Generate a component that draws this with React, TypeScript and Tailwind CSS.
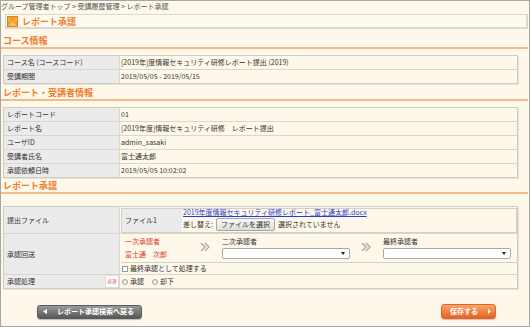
import React from "react";

const font = "font-['Noto_Sans_CJK_JP','Noto_Sans','Liberation_Sans',sans-serif]";

function Heading({ children, className = "" }: { children: React.ReactNode; className?: string }) {
  return (
    <div className={className}>
      <div className="h-[12px] pl-[2px] text-[9px] leading-[12px] font-bold text-[#ef7d2f]">{children}</div>
      <div className="mr-[1px] h-[2px] bg-[#f6b98a]" />
    </div>
  );
}

function Row({
  label,
  children,
  h,
  first = false,
  badge = false,
}: {
  label: string;
  children?: React.ReactNode;
  h?: string;
  first?: boolean;
  badge?: boolean;
}) {
  const height = h ?? (first ? "h-[13px]" : "h-[14px]");
  return (
    <div className={`flex ${height} ${first ? "" : "border-t border-[#dad6ca]"}`}>
      <div className="flex w-[115px] shrink-0 items-center justify-between bg-[#ebebeb] pl-[3px]">
        <span>{label}</span>
        {badge && (
          <span className="flex h-full w-[14px] items-center justify-center border border-[#dcdcdc] bg-white text-[4.5px] leading-none text-[#e04040]">
            必須
          </span>
        )}
      </div>
      <div className="flex min-w-0 flex-1 items-center border-l border-[#dad6ca] pl-[1px]">{children}</div>
    </div>
  );
}

function Table({ children, className = "" }: { children: React.ReactNode; className?: string }) {
  return (
    <div className={`ml-[2px] w-[515px] border border-[#cfccc2] shadow-[1px_1px_0_#e6e2d6] ${className}`}>
      {children}
    </div>
  );
}

function Chevrons() {
  return (
    <svg width="11" height="10" viewBox="0 0 11 10" className="shrink-0">
      <path d="M1 1 L5 5 L1 9 M5 1 L9 5 L5 9" fill="none" stroke="#a8a8a8" strokeWidth="1.2" />
      <path d="M2.5 1 L6.5 5 L2.5 9" fill="none" stroke="#c8c8c8" strokeWidth="0.8" />
    </svg>
  );
}

function Select() {
  return (
    <div className="flex h-[11px] w-[128px] items-center justify-end rounded-[2px] border border-[#a9a9a9] bg-white pr-[4px]">
      <svg width="4" height="3" viewBox="0 0 4 3">
        <path d="M0 0 L4 0 L2 3 Z" fill="#222" />
      </svg>
    </div>
  );
}

function Radio() {
  return (
    <span className="inline-block h-[6px] w-[6px] rounded-full border border-[#9a9a9a] bg-gradient-to-b from-[#e8e8e8] to-[#ffffff]" />
  );
}

export default function App() {
  return (
    <div className={`relative h-[327px] w-[530px] overflow-hidden border border-[#a6a6a6] bg-[#fdf8e9] text-[7px] leading-none text-[#333] ${font}`}>
      {/* breadcrumb */}
      <div className="h-[12px] pt-[1px] text-[7px] leading-[9px] text-[#555]">
        グループ管理者トップ &gt; 受講履歴管理 &gt; レポート承認
      </div>

      {/* title bar */}
      <div className="ml-[4px] mr-[1px] mt-[1px] flex h-[15px] items-center gap-[4px] border border-b-2 border-r-2 border-[#dcd8cc] bg-[#fefaee] pl-[1px]">
        <svg width="11" height="11" viewBox="0 0 11 11">
          <defs>
            <linearGradient id="g" x1="0" y1="0" x2="0" y2="1">
              <stop offset="0" stopColor="#fbbf4e" />
              <stop offset="1" stopColor="#f08a1e" />
            </linearGradient>
          </defs>
          <rect x="0" y="0" width="11" height="11" fill="url(#g)" />
          <path d="M0 0 L11 0 L5.5 5.5 Z" fill="#f29a2a" />
          <path d="M0 11 L11 11 L5.5 5.5 Z" fill="#fcc15c" />
          <rect x="0.5" y="0.5" width="10" height="10" fill="none" stroke="#e4821c" />
        </svg>
        <span className="text-[9px] font-bold leading-none text-[#ef7d2f]">レポート承認</span>
      </div>

      {/* course info */}
      <Heading className="mt-[6px]">コース情報</Heading>
      <Table className="mt-[6px]">
        <Row label="コース名 (コースコード)" first>
          [2019年]度情報セキュリティ研修レポート提出 (2019)
        </Row>
        <Row label="受講期間">2019/05/05 - 2019/05/15</Row>
      </Table>

      {/* report info */}
      <Heading className="mt-[3px]">レポート・受講者情報</Heading>
      <Table className="mt-[6px]">
        <Row label="レポートコード" first>01</Row>
        <Row label="レポート名">[2019年度]情報セキュリティ研修　レポート提出</Row>
        <Row label="ユーザID">admin_sasaki</Row>
        <Row label="受講者氏名">富士通太郎</Row>
        <Row label="承認依頼日時">2019/05/05 10:02:02</Row>
      </Table>

      {/* approval */}
      <Heading className="mt-[2px]">レポート承認</Heading>
      <Table className="mt-[12px]">
        <Row label="提出ファイル" h="h-[26px]" first>
          <div className="flex h-[25px] flex-1 border border-[#d3d0c6]">
            <div className="flex w-[60px] items-center bg-[#ebebeb] pl-[3px]">ファイル1</div>
            <div className="flex flex-1 flex-col justify-center gap-[2px] pl-[1px]">
              <span className="text-[#2a3bd0] underline">2019年度情報セキュリティ研修レポート_富士通太郎.docx</span>
              <div className="flex items-center gap-[3px]">
                <span>差し替え:</span>
                <span className="flex h-[13px] items-center rounded-[2px] border border-[#a6a6a6] bg-gradient-to-b from-[#f8f8f8] to-[#dedede] px-[4px]">
                  ファイルを選択
                </span>
                <span>選択されていません</span>
              </div>
            </div>
          </div>
        </Row>
        <Row label="承認回送" h="h-[41px]">
          <div className="flex h-full flex-1 flex-col">
            <div className="flex h-[28px] items-start">
              <div className="ml-[4px] mt-[4px] flex w-[75px] flex-col gap-[6px] text-[#d83a2e]">
                <span>一次承認者</span>
                <span>富士通　次郎</span>
              </div>
              <div className="mt-[8px]">
                <Chevrons />
              </div>
              <div className="ml-[11px] mt-[4px] flex flex-col gap-[3px]">
                <span>二次承認者</span>
                <Select />
              </div>
              <div className="ml-[11px] mt-[8px]">
                <Chevrons />
              </div>
              <div className="ml-[11px] mt-[4px] flex flex-col gap-[3px]">
                <span>最終承認者</span>
                <Select />
              </div>
            </div>
            <div className="flex flex-1 items-center gap-[2px] border-t border-[#d3d0c6] pl-[1px]">
              <span className="inline-block h-[6px] w-[6px] border border-[#9a9a9a] bg-white" />
              <span>最終承認として処理する</span>
            </div>
          </div>
        </Row>
        <Row label="承認処理" badge>
          <div className="flex items-center gap-[2px] pl-[1px]">
            <Radio />
            <span>承認</span>
            <span className="ml-[4px]" />
            <Radio />
            <span>却下</span>
          </div>
        </Row>
      </Table>

      {/* buttons */}
      <div className="mt-[15px] flex items-center justify-between pl-[36px] pr-[33px]">
        <div className="flex h-[14px] w-[105px] items-center rounded-[3px] border border-[#5b5b5b] bg-gradient-to-b from-[#9a9a9a] to-[#575757] pl-[5px] text-white shadow-[0_1px_1px_rgba(0,0,0,0.25)]">
          <svg width="4" height="5" viewBox="0 0 4 5">
            <path d="M4 0 L0 2.5 L4 5 Z" fill="#fff" />
          </svg>
          <span className="ml-[10px] font-bold">レポート承認検索へ戻る</span>
        </div>
        <div className="flex h-[15px] w-[55px] items-center justify-between rounded-[3px] border border-[#e0652a] bg-gradient-to-b from-[#f8a56a] to-[#e8601e] pl-[8px] pr-[4px] text-white shadow-[0_1px_1px_rgba(0,0,0,0.2)]">
          <span className="font-bold">保存する</span>
          <svg width="3" height="5" viewBox="0 0 3 5">
            <path d="M0 0 L3 2.5 L0 5 Z" fill="#fff" />
          </svg>
        </div>
      </div>
    </div>
  );
}
